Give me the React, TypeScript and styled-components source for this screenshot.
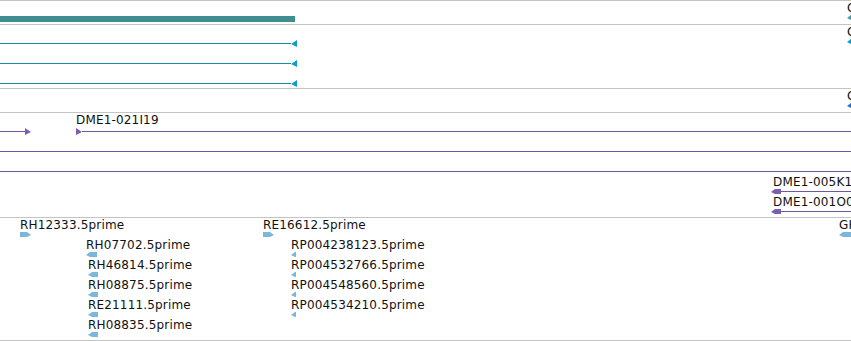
import React from "react";
import styled, { createGlobalStyle } from "styled-components";

const GlobalStyle = createGlobalStyle`
  html, body {
    margin: 0;
    padding: 0;
    background: #ffffff;
  }
  body {
    font-family: "DejaVu Sans", "Liberation Sans", sans-serif;
  }
`;

const PURPLE = "#6f57a6";
const PURPLE_HEAD = "#7b5eb0";
const TEAL = "#418e90";
const BLUE_LINE = "#1b8aa6";
const CYAN = "#0d9fc6";
const EST = "#7bb6dc";

const Browser = styled.div`
  width: 851px;
  height: 341px;
  display: flex;
  flex-direction: column;
  overflow: hidden;
  background: #ffffff;
`;

const Track = styled.div<{ $height: number; $last?: boolean }>`
  position: relative;
  flex: none;
  height: ${({ $height }) => $height}px;
  border-top: 1px solid #c4c4c4;
  border-bottom: ${({ $last }) => ($last ? "1px solid #c4c4c4" : "none")};
  overflow: hidden;
`;

// rows of line features, stacked top-down inside a track
const LineRows = styled.div<{ $top: number }>`
  display: flex;
  flex-direction: column;
  gap: 13px;
  padding-top: ${({ $top }) => $top}px;
`;

const LineRow = styled.div<{ $h?: number; $w?: number }>`
  display: flex;
  align-items: center;
  height: ${({ $h }) => $h ?? 7}px;
  ${({ $w }) => ($w !== undefined ? `width: ${$w}px;` : "")}
`;

const Rule = styled.div<{ $w?: number; $color: string }>`
  height: 1px;
  background: ${({ $color }) => $color};
  ${({ $w }) => ($w !== undefined ? `width: ${$w}px; flex: none;` : "flex: 1;")}
`;

const Gap = styled.div<{ $w: number }>`
  width: ${({ $w }) => $w}px;
  flex: none;
`;

const GeneBar = styled.div`
  width: 295px;
  height: 6px;
  margin-top: 15px;
  background: ${TEAL};
`;

// a stack of labelled features sitting at one genome position
const Stack = styled.div<{ $x: number; $y: number }>`
  position: absolute;
  left: ${({ $x }) => $x}px;
  top: ${({ $y }) => $y}px;
  display: flex;
  flex-direction: column;
  gap: 1px;
`;

const Feature = styled.div<{ $shift?: number }>`
  display: flex;
  flex-direction: column;
  align-items: flex-start;
  margin-left: ${({ $shift }) => $shift ?? 0}px;
`;

const Label = styled.span<{ $indent?: number }>`
  font-size: 12px;
  line-height: 14px;
  letter-spacing: 0.17px;
  color: #111111;
  white-space: nowrap;
  margin-left: ${({ $indent }) => $indent ?? 0}px;
`;

const FloatLabel = styled(Label)<{ $x: number }>`
  position: absolute;
  left: ${({ $x }) => $x}px;
  top: 0;
`;

const Glyph = styled.svg`
  display: block;
  flex: none;
  overflow: visible;
`;

type Dir = "left" | "right";

const Head = ({ dir, color }: { dir: Dir; color: string }) => (
  <Glyph width={6} height={7}>
    <polygon points={dir === "left" ? "6,0 6,7 0,4" : "0,0 0,7 6,4"} fill={color} />
  </Glyph>
);

const Chunk = ({ w, dir, color }: { w: number; dir: Dir; color: string }) => (
  <Glyph width={w} height={5}>
    <polygon
      points={
        dir === "left"
          ? `0,3 4,0 ${w},0 ${w},5 4,5`
          : `0,0 ${w - 4},0 ${w},3 ${w - 4},5 0,5`
      }
      fill={color}
    />
  </Glyph>
);

// arrow with a long tail running off the right edge
const Clone = ({ name }: { name: string }) => (
  <Feature>
    <Label $indent={2}>{name}</Label>
    <LineRow $h={5} $w={80}>
      <Chunk w={10} dir="left" color={PURPLE_HEAD} />
      <Rule $color={PURPLE} />
    </LineRow>
  </Feature>
);

type Est = { name: string; w: number; dir: Dir; shift?: number };

const estStacks: { x: number; y: number; items: Est[] }[] = [
  { x: 20, y: 0, items: [{ name: "RH12333.5prime", w: 11, dir: "right" }] },
  {
    x: 86,
    y: 20,
    items: [
      { name: "RH07702.5prime", w: 11, dir: "left" },
      { name: "RH46814.5prime", w: 10, dir: "left", shift: 2 },
      { name: "RH08875.5prime", w: 10, dir: "left", shift: 2 },
      { name: "RE21111.5prime", w: 10, dir: "left", shift: 2 },
      { name: "RH08835.5prime", w: 10, dir: "left", shift: 2 },
    ],
  },
  { x: 263, y: 0, items: [{ name: "RE16612.5prime", w: 11, dir: "right" }] },
  {
    x: 291,
    y: 20,
    items: [
      { name: "RP004238123.5prime", w: 5, dir: "left" },
      { name: "RP004532766.5prime", w: 5, dir: "left" },
      { name: "RP004548560.5prime", w: 5, dir: "left" },
      { name: "RP004534210.5prime", w: 5, dir: "left" },
    ],
  },
  { x: 839, y: 0, items: [{ name: "GH04521.5prime", w: 12, dir: "left" }] },
];

export default function App() {
  return (
    <>
      <GlobalStyle />
      <Browser>
        {/* gene span */}
        <Track $height={23}>
          <GeneBar />
          <Stack $x={847} $y={0}>
            <Feature>
              <Label>CG3491</Label>
              <Chunk w={8} dir="left" color="#4c9aa6" />
            </Feature>
          </Stack>
        </Track>

        {/* transcripts */}
        <Track $height={63}>
          <LineRows $top={15}>
            {[0, 1, 2].map((i) => (
              <LineRow key={i} $w={297}>
                <Rule $color={BLUE_LINE} />
                <Head dir="left" color={CYAN} />
              </LineRow>
            ))}
          </LineRows>
          <Stack $x={847} $y={0}>
            <Feature>
              <Label>CG3491-RA</Label>
              <Chunk w={8} dir="left" color={CYAN} />
            </Feature>
          </Stack>
        </Track>

        {/* CDS */}
        <Track $height={23}>
          <Stack $x={847} $y={0}>
            <Feature>
              <Label>CG3491</Label>
              <Chunk w={8} dir="left" color="#2f6fcc" />
            </Feature>
          </Stack>
        </Track>

        {/* BAC clones */}
        <Track $height={104}>
          <FloatLabel $x={76}>DME1-021I19</FloatLabel>
          <LineRows $top={15}>
            <LineRow>
              <Rule $w={25} $color={PURPLE} />
              <Head dir="right" color={PURPLE_HEAD} />
              <Gap $w={45} />
              <Head dir="right" color={PURPLE_HEAD} />
              <Rule $color={PURPLE} />
            </LineRow>
            <LineRow>
              <Rule $color={PURPLE} />
            </LineRow>
            <LineRow>
              <Rule $color={PURPLE} />
            </LineRow>
          </LineRows>
          <Stack $x={771} $y={62}>
            <Clone name="DME1-005K13" />
            <Clone name="DME1-001O07" />
          </Stack>
        </Track>

        {/* ESTs */}
        <Track $height={122} $last>
          {estStacks.map((s) => (
            <Stack key={s.x} $x={s.x} $y={s.y}>
              {s.items.map((e) => (
                <Feature key={e.name} $shift={e.shift}>
                  <Label>{e.name}</Label>
                  <Chunk w={e.w} dir={e.dir} color={EST} />
                </Feature>
              ))}
            </Stack>
          ))}
        </Track>
      </Browser>
    </>
  );
}
